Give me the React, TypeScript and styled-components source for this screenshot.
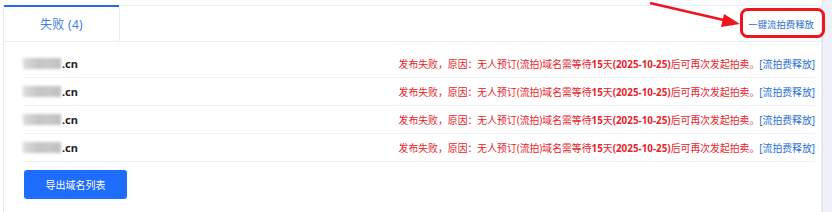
import styled, { createGlobalStyle } from 'styled-components'

const GlobalStyle = createGlobalStyle`
  html, body {
    margin: 0;
    padding: 0;
    background: #ffffff;
    font-family: "Noto Sans", "Noto Sans CJK SC", sans-serif;
  }
`

const Page = styled.div`
  position: relative;
  display: flex;
  height: 212px;
  overflow: hidden;
`

const Panel = styled.div`
  flex: 1;
  margin: 5px 0 0 3px;
  border-left: 1px solid #e6edf7;
  border-right: 1px solid #e6edf7;
  background: #ffffff;
`

const Gutter = styled.div`
  width: 9px;
  background: #eef2f8;
  border-left: 1px solid #e3e9f2;
`

const TabBar = styled.div`
  display: flex;
  align-items: stretch;
  height: 36px;
  border-bottom: 1px solid #e8edf4;
`

const Tab = styled.div`
  display: flex;
  flex-direction: column;
  width: 115px;
  border-right: 1px solid #e8edf4;
`

const TabIndicator = styled.div`
  height: 2px;
  background-color: #2466f0;
`

const TabLabel = styled.div`
  flex: 1;
  display: flex;
  align-items: center;
  justify-content: center;
  color: #3f7ee8;
  font-size: 12px;
  letter-spacing: 0.3px;
`

const TabRest = styled.div`
  flex: 1;
  display: flex;
  align-items: center;
  justify-content: flex-end;
  border-top: 1px solid #e6edf7;
`

const TopLink = styled.a`
  margin-right: 7px;
  color: #2a6fd6;
  font-size: 9.4px;
  text-decoration: none;
`

const List = styled.div`
  padding: 8px 6px 0 19px;
`

const Row = styled.div`
  display: flex;
  align-items: center;
  justify-content: space-between;
  height: 27px;
  border-bottom: 1px solid #eef1f5;
`

const Domain = styled.div`
  display: flex;
  align-items: center;
  font-size: 11px;
  font-weight: 700;
  color: #222;
`

const Redacted = styled.span`
  display: inline-block;
  width: 38px;
  height: 11px;
  margin-right: 1px;
  background: linear-gradient(90deg, #dcdcdc, #c4c4c4 40%, #c9c9c9 70%, #bdbdbd);
  filter: blur(1.5px);
`

const Message = styled.div`
  color: #e8232a;
  font-size: 9.85px;
  white-space: nowrap;

  b {
    font-weight: 700;
  }
`

const Release = styled.a`
  color: #2a6fd6;
  text-decoration: none;
`

const ExportButton = styled.button`
  margin: 8px 0 0 1px;
  width: 103px;
  height: 29px;
  border: none;
  border-radius: 3px;
  background: #1f6dff;
  color: #ffffff;
  font-family: inherit;
  font-size: 10px;
  cursor: pointer;
`

const Annotation = styled.svg`
  position: absolute;
  left: 0;
  top: 0;
  pointer-events: none;
`

const rows = [1, 2, 3, 4]

export default function App() {
  return (
    <>
      <GlobalStyle />
      <Page>
        <Panel>
          <TabBar>
            <Tab>
              <TabIndicator />
              <TabLabel>失败 (4)</TabLabel>
            </Tab>
            <TabRest>
              <TopLink href="#">一键流拍费释放</TopLink>
            </TabRest>
          </TabBar>
          <List>
            {rows.map(r => (
              <Row key={r}>
                <Domain>
                  <Redacted />
                  .cn
                </Domain>
                <Message>
                  发布失败，原因：无人预订(流拍)域名需等待<b>15</b>天<b>(2025-10-25)</b>后可再次发起拍卖。
                  <Release href="#">[流拍费释放]</Release>
                </Message>
              </Row>
            ))}
            <ExportButton>导出域名列表</ExportButton>
          </List>
        </Panel>
        <Gutter />
        <Annotation width="832" height="212" viewBox="0 0 832 212">
          <line x1="650" y1="3" x2="728" y2="21" stroke="#f0141e" strokeWidth="2.5" />
          <polygon points="740,24 724,14 721,27" fill="#f0141e" />
          <rect x="741.5" y="9.5" width="82" height="27" rx="6" fill="none" stroke="#f0141e" strokeWidth="3" />
        </Annotation>
      </Page>
    </>
  )
}
